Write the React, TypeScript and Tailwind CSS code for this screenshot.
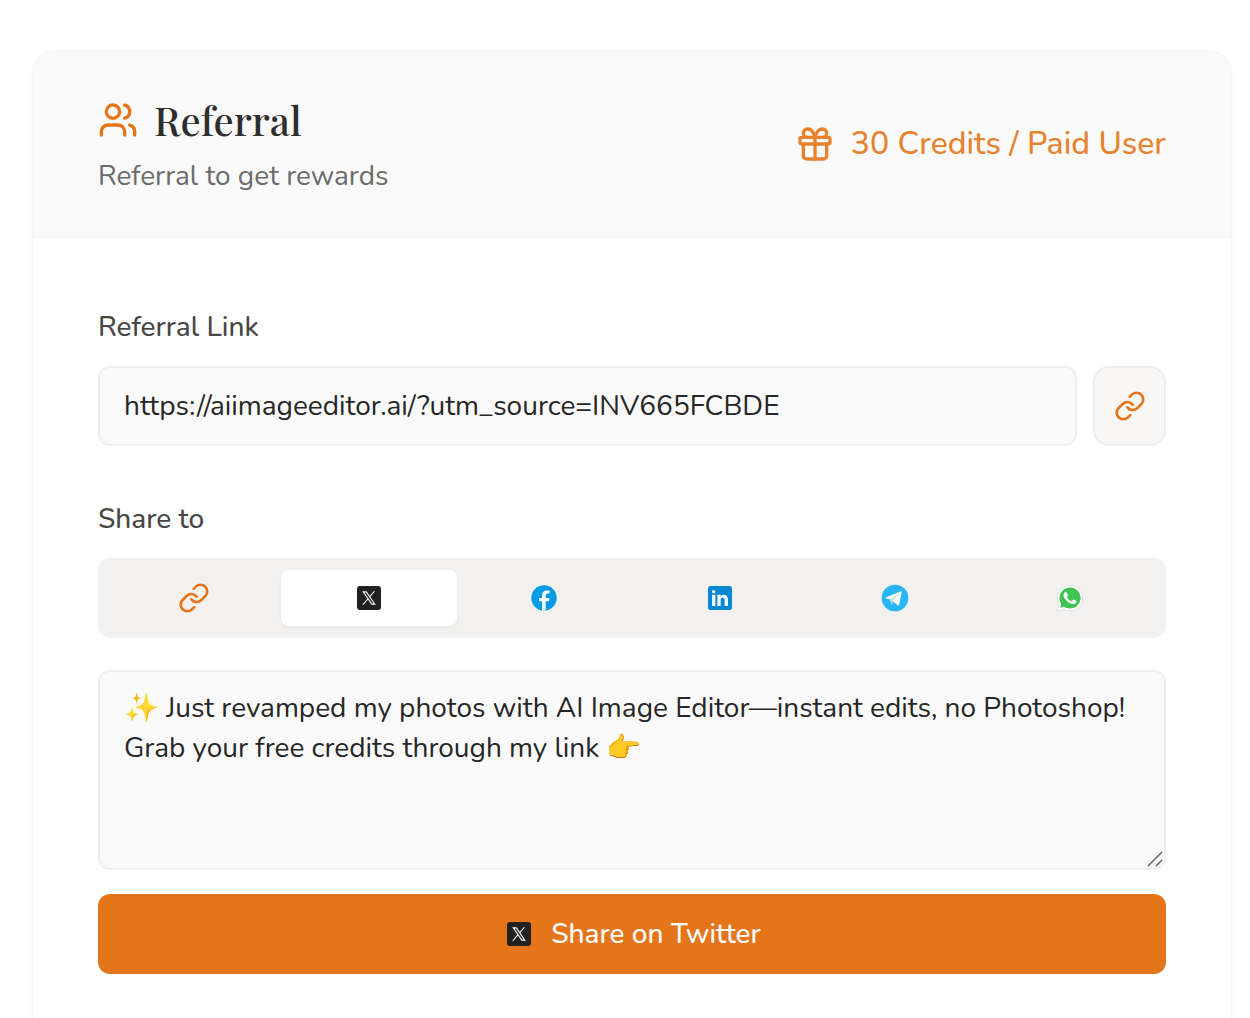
import { useState } from "react";
import type { ReactNode } from "react";
import { Gift, Link, Users } from "lucide-react";

function XLogo() {
  return (
    <svg viewBox="0 0 48 48" className="size-8 shrink-0" aria-hidden="true">
      <path
        fill="#212121"
        d="M38,42H10c-2.209,0-4-1.791-4-4V10c0-2.209,1.791-4,4-4h28c2.209,0,4,1.791,4,4v28C42,40.209,40.209,42,38,42z"
      />
      <path
        fill="#fff"
        d="M34.257,34h-6.437L13.829,14h6.437L34.257,34z M28.587,32.304h2.563L19.499,15.696h-2.563L28.587,32.304z"
      />
      <polygon fill="#fff" points="15.866,34 23.069,25.656 22.127,24.407 13.823,34" />
      <polygon fill="#fff" points="24.45,21.721 25.355,23.01 33.136,14 31.136,14" />
    </svg>
  );
}

function FacebookLogo() {
  return (
    <svg viewBox="0 0 48 48" className="size-8 shrink-0" aria-hidden="true">
      <circle cx="24" cy="24" r="19" fill="#039be5" />
      <path
        fill="#fff"
        d="M26.572,29.036h4.917l0.772-4.995h-5.69v-2.73c0-2.075,0.678-3.915,2.619-3.915h3.119v-4.359c-0.548-0.074-1.707-0.236-3.897-0.236c-4.573,0-7.254,2.415-7.254,7.917v3.323h-4.701v4.995h4.701v13.729C22.089,42.905,23.032,43,24,43c0.875,0,1.729-0.08,2.572-0.194V29.036z"
      />
    </svg>
  );
}

function LinkedInLogo() {
  return (
    <svg viewBox="0 0 48 48" className="size-8 shrink-0" aria-hidden="true">
      <rect x="6" y="6" width="36" height="36" rx="4" fill="#0288d1" />
      <path
        fill="#fff"
        d="M12 19H17V36H12zM14.485 17h-.028C12.965 17 12 15.888 12 14.499 12 13.08 12.995 12 14.514 12c1.521 0 2.458 1.08 2.486 2.499C17 15.887 16.035 17 14.485 17zM36 36h-5v-9.099c0-2.198-1.225-3.698-3.192-3.698-1.501 0-2.313 1.012-2.707 1.99C24.957 25.543 25 26.511 25 27v9h-5V19h5v2.616C25.721 20.5 26.85 19 29.738 19c3.578 0 6.261 2.25 6.261 7.274L36 36z"
      />
    </svg>
  );
}

function TelegramLogo() {
  return (
    <svg viewBox="0 0 48 48" className="size-8 shrink-0" aria-hidden="true">
      <circle cx="24" cy="24" r="20" fill="#29b6f6" />
      <path
        fill="#fff"
        d="M33.95,15l-3.746,19.126c0,0-0.161,0.874-1.245,0.874c-0.576,0-0.873-0.274-0.873-0.274l-8.114-6.733l-3.97-2.001l-5.095-1.355c0,0-0.907-0.262-0.907-1.012c0-0.625,0.933-0.923,0.933-0.923l21.316-8.468c-0.001-0.001,0.651-0.235,1.126-0.234C33.667,14,34,14.125,34,14.5C34,14.75,33.95,15,33.95,15z"
      />
      <path
        fill="#b0bec5"
        d="M23,30.505l-3.426,3.374c0,0-0.149,0.115-0.348,0.12c-0.069,0.002-0.143-0.009-0.219-0.043l0.964-5.965L23,30.505z"
      />
      <path
        fill="#cfd8dc"
        d="M29.897,18.196c-0.169-0.22-0.481-0.26-0.701-0.093L16,26c0,0,2.106,5.892,2.427,6.912c0.322,1.021,0.58,1.045,0.58,1.045l0.964-5.965l9.832-9.096C30.023,18.729,30.064,18.416,29.897,18.196z"
      />
    </svg>
  );
}

function WhatsAppLogo() {
  return (
    <svg viewBox="0 0 48 48" className="size-8 shrink-0" aria-hidden="true">
      <path
        fill="#fff"
        stroke="#cfd8dc"
        d="M4.868,43.303l2.694-9.835C5.9,30.59,5.026,27.324,5.027,23.979C5.032,13.514,13.548,5,24.014,5c5.079,0.002,9.845,1.979,13.43,5.566c3.584,3.588,5.558,8.356,5.556,13.428c-0.004,10.465-8.522,18.98-18.986,18.98h-0.008c-3.177-0.001-6.3-0.798-9.073-2.311L4.868,43.303z"
      />
      <path
        fill="#40c351"
        d="M35.176,12.832c-2.98-2.982-6.941-4.625-11.157-4.626c-8.704,0-15.783,7.076-15.787,15.774c-0.001,2.981,0.833,5.883,2.413,8.396l0.376,0.597l-1.595,5.821l5.973-1.566l0.577,0.342c2.422,1.438,5.2,2.198,8.032,2.199h0.006c8.698,0,15.777-7.077,15.78-15.776C39.795,19.778,38.156,15.814,35.176,12.832z"
      />
      <path
        fill="#fff"
        d="M19.268,16.045c-0.355-0.79-0.729-0.806-1.068-0.82c-0.277-0.012-0.593-0.011-0.909-0.011c-0.316,0-0.83,0.119-1.265,0.594c-0.435,0.475-1.661,1.622-1.661,3.956c0,2.334,1.7,4.59,1.937,4.906c0.237,0.316,3.282,5.259,8.104,7.161c4.007,1.58,4.823,1.266,5.693,1.187c0.87-0.079,2.807-1.147,3.202-2.255c0.395-1.108,0.395-2.057,0.277-2.255c-0.119-0.198-0.435-0.316-0.909-0.554s-2.807-1.385-3.242-1.543c-0.435-0.158-0.751-0.237-1.068,0.238c-0.316,0.474-1.225,1.543-1.502,1.859c-0.277,0.317-0.554,0.357-1.028,0.119c-0.474-0.238-2.002-0.738-3.815-2.354c-1.41-1.257-2.362-2.81-2.639-3.285c-0.277-0.474-0.03-0.731,0.208-0.968c0.213-0.213,0.474-0.554,0.712-0.831c0.237-0.277,0.316-0.475,0.474-0.791c0.158-0.317,0.079-0.594-0.04-0.831C20.612,19.329,19.69,16.983,19.268,16.045z"
      />
    </svg>
  );
}

const channels: { name: string; icon: ReactNode }[] = [
  { name: "Link", icon: <Link className="size-8 text-[#e5751a]" aria-hidden="true" /> },
  { name: "Twitter", icon: <XLogo /> },
  { name: "Facebook", icon: <FacebookLogo /> },
  { name: "LinkedIn", icon: <LinkedInLogo /> },
  { name: "Telegram", icon: <TelegramLogo /> },
  { name: "WhatsApp", icon: <WhatsAppLogo /> },
];

const initialMessage =
  "✨ Just revamped my photos with AI Image Editor—instant edits, no Photoshop! Grab your free credits through my link 👉";

export default function App() {
  const [channel, setChannel] = useState("Twitter");
  const [message, setMessage] = useState(initialMessage);

  return (
    <main className="flex min-h-screen flex-col bg-white pt-[50px] pr-[18px] pl-8 font-[Nunito,'Open_Sans',sans-serif] text-[28px] leading-10 text-[#262626]">
      <section className="flex grow flex-col overflow-hidden rounded-t-3xl border-2 border-b-0 border-[#f7f7f7] bg-white shadow-[0_2px_4px_rgba(0,0,0,0.03)]">
        <header className="flex items-center justify-between border-b-2 border-[#f6f6f6] bg-[#fafafa] px-16 pt-12 pb-10">
          <div className="flex flex-col gap-4">
            <h1 className="flex items-center gap-4 font-['Playfair_Display','Liberation_Serif',serif] text-[40px] leading-10 font-medium text-[#2e2e2e]">
              <Users className="size-10 text-[#e5751a]" aria-hidden="true" />
              Referral
            </h1>
            <p className="text-[#6b6b6b]">Referral to get rewards</p>
          </div>
          <p className="flex items-center gap-4 pb-2 text-[32px] font-medium text-[#e7822f]">
            <Gift className="size-10" aria-hidden="true" />
            30 Credits / Paid User
          </p>
        </header>

        <div className="flex flex-col px-16 pt-16 pb-11">
          <label htmlFor="referral-link" className="mb-[14px] leading-[50px] font-medium text-[#474747]">
            Referral Link
          </label>
          <div className="mb-12 flex gap-4">
            <input
              id="referral-link"
              type="text"
              readOnly
              value="https://aiimageeditor.ai/?utm_source=INV665FCBDE"
              className="h-20 min-w-0 grow rounded-xl border-2 border-[#f2eeeb] bg-[#fafafa] px-6"
            />
            <button
              type="button"
              aria-label="Copy link"
              className="flex w-[73px] shrink-0 items-center justify-center rounded-2xl border-2 border-[#efedeb] bg-[#f8f7f6] text-[#e5751a]"
            >
              <Link className="size-8" aria-hidden="true" />
            </button>
          </div>

          <h2 id="share-to" className="mb-[14px] leading-[50px] font-medium text-[#474747]">
            Share to
          </h2>
          <div
            role="tablist"
            aria-labelledby="share-to"
            className="mb-8 grid h-20 grid-cols-6 rounded-xl bg-[#f3f1f0] px-2 py-3"
          >
            {channels.map(({ name, icon }) => (
              <button
                key={name}
                type="button"
                role="tab"
                aria-label={name}
                aria-selected={channel === name}
                onClick={() => setChannel(name)}
                className="flex items-center justify-center rounded-lg aria-selected:bg-white aria-selected:shadow-[0_2px_4px_rgba(0,0,0,0.05)]"
              >
                {icon}
              </button>
            ))}
          </div>

          <div className="relative mb-6 flex">
            <textarea
              aria-label="Message"
              value={message}
              onChange={(event) => setMessage(event.target.value)}
              className="h-50 grow resize-none rounded-xl border-2 border-[#f2eeeb] bg-[#fafafa] px-6 py-4"
            />
            <svg
              viewBox="0 0 16 16"
              className="pointer-events-none absolute right-[3px] bottom-[3px] size-4"
              stroke="#666"
              strokeWidth="1.5"
              aria-hidden="true"
            >
              <path d="M1 15 15 1M9 15l6-6" />
            </svg>
          </div>

          <button
            type="button"
            className="flex h-20 items-center justify-center gap-4 rounded-xl bg-[#e5751a] font-medium text-white"
          >
            <XLogo />
            Share on {channel}
          </button>
        </div>
      </section>
    </main>
  );
}
